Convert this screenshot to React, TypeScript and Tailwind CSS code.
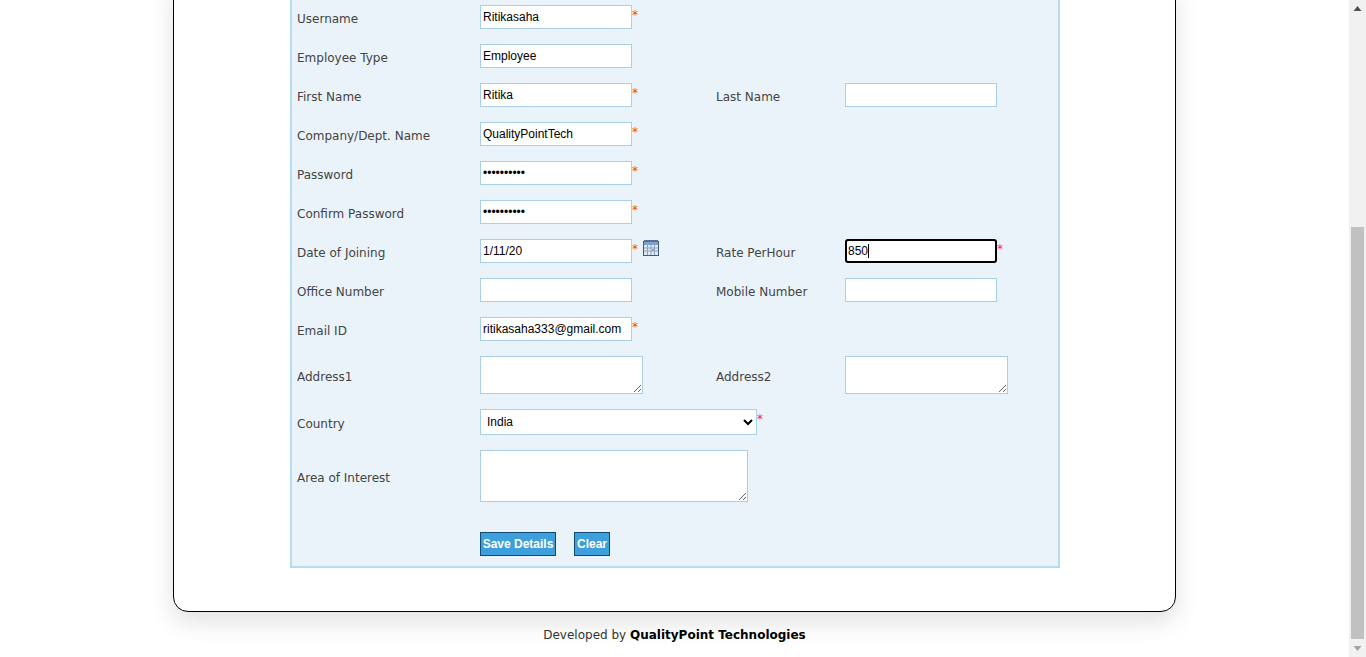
const label = "text-[12px] leading-[15px] text-[#444444] pt-[5px]";
const field = "w-[152px] h-[24px] border border-[#a8cfe6] bg-white px-[2px] text-[12px] text-black outline-none";

function Star({ pink }: { pink?: boolean }) {
  return (
    <span className={`self-start mt-[3px] h-[15px] text-[12px] leading-[15px] font-['DejaVu_Sans',sans-serif] ${pink ? "text-[#ff1a4b]" : "text-[#f24a00]"}`}>*</span>
  );
}

function Field({ value, type = "text", star = false }: { value?: string; type?: string; star?: boolean }) {
  return (
    <div className="flex items-center">
      <input type={type} defaultValue={value} className={`${field} font-['Liberation_Sans',sans-serif]`} />
      {star && <Star />}
    </div>
  );
}

function Row({ name, children, name2, children2 }: { name: string; children: React.ReactNode; name2?: string; children2?: React.ReactNode }) {
  return (
    <div className="grid grid-cols-[183px_236px_129px_1fr] items-center">
      <div className={label}>{name}</div>
      <div>{children}</div>
      {name2 && <div className={label}>{name2}</div>}
      {children2 && <div>{children2}</div>}
    </div>
  );
}

function Calendar() {
  return (
    <svg width="16" height="16" viewBox="0 0 16 16" className="ml-[5px] -mt-[6px]">
      <rect x="0.5" y="1.5" width="15" height="14" fill="#dfe8f5" stroke="#3d5a80" />
      <rect x="1" y="0" width="14" height="2" fill="#5f6f86" />
      <rect x="1" y="2" width="14" height="3" fill="#7f9fcf" />
      <path d="M1 8h14M1 11h14M4.5 5v10M8 5v10M11.5 5v10" stroke="#8ca3c6" strokeWidth="1" />
      <rect x="9" y="9" width="2" height="2" fill="#c48a9f" />
    </svg>
  );
}

function Scrollbar() {
  return (
    <aside className="w-[17px] h-full shrink-0 bg-[#f1f1f1] flex flex-col items-center">
      <svg width="17" height="17" viewBox="0 0 17 17" className="shrink-0">
        <path d="M8.5 6L12.5 11H4.5Z" fill="#505050" />
      </svg>
      <div className="w-[13px] h-[412px] mt-[210px] bg-[#c1c1c1]" />
      <svg width="17" height="17" viewBox="0 0 17 17" className="shrink-0 mt-[1px]">
        <path d="M8.5 11L4.5 6H12.5Z" fill="#a3a3a3" />
      </svg>
    </aside>
  );
}

export default function App() {
  return (
    <div className="h-screen w-full flex overflow-hidden bg-white font-['DejaVu_Sans',sans-serif]">
      <main className="flex-1 min-w-0 h-full flex flex-col justify-end items-center">
        <section className="w-[1003px] shrink-0 border border-black rounded-b-[15px] bg-white shadow-[0_10px_25px_rgba(0,0,0,0.12)] pb-[43px] flex flex-col items-center">
          <form className="w-[770px] ml-[1px] border-2 border-[#b4dcf1] bg-[#eaf3fa] pl-[5px] pt-[20px] pb-[10px] flex flex-col gap-[15px]">
            <Row name="Username"><Field value="Ritikasaha" star /></Row>
            <Row name="Employee Type"><Field value="Employee" /></Row>
            <Row name="First Name" name2="Last Name" children2={<Field />}><Field value="Ritika" star /></Row>
            <Row name="Company/Dept. Name"><Field value="QualityPointTech" star /></Row>
            <Row name="Password"><Field value="ritika1234" type="password" star /></Row>
            <Row name="Confirm Password"><Field value="ritika1234" type="password" star /></Row>
            <Row
              name="Date of Joining"
              name2="Rate PerHour"
              children2={
                <div className="flex items-center">
                  <div className="relative">
                    <input
                      type="text"
                      defaultValue="850"
                      className="block w-[152px] h-[24px] border-2 border-black rounded-[3px] bg-white px-[1px] text-[12px] text-black outline-none caret-transparent font-['Liberation_Sans',sans-serif]"
                    />
                    <span className="absolute left-[23px] top-[5px] w-px h-[14px] bg-black" />
                  </div>
                  <Star pink />
                </div>
              }
            >
              <div className="flex items-center">
                <input type="text" defaultValue="1/11/20" className={`${field} font-['Liberation_Sans',sans-serif]`} />
                <Star />
                <Calendar />
              </div>
            </Row>
            <Row name="Office Number" name2="Mobile Number" children2={<Field />}><Field /></Row>
            <Row name="Email ID"><Field value="ritikasaha333@gmail.com" star /></Row>
            <Row
              name="Address1"
              name2="Address2"
              children2={<textarea className="block w-[163px] h-[38px] border border-[#a8cfe6] bg-white outline-none" />}
            >
              <textarea className="block w-[163px] h-[38px] border border-[#a8cfe6] bg-white outline-none" />
            </Row>
            <Row name="Country">
              <div className="flex items-center w-[290px]">
                <select defaultValue="India" className="w-[277px] h-[26px] shrink-0 border border-[#a8cfe6] bg-white text-[12px] text-black outline-none font-['Liberation_Sans',sans-serif] pl-[2px]">
                  <option>India</option>
                </select>
                <Star pink />
              </div>
            </Row>
            <Row name="Area of Interest">
              <textarea className="block w-[268px] h-[52px] border border-[#a8cfe6] bg-white outline-none" />
            </Row>
            <div className="mt-[15px] pl-[183px] flex gap-[18px]">
              <button type="button" className="w-[76px] h-[24px] border border-[#0f4c75] bg-[#3d9fdc] text-white text-[12px] font-bold font-['Liberation_Sans',sans-serif]">Save Details</button>
              <button type="button" className="w-[36px] h-[24px] border border-[#0f4c75] bg-[#3d9fdc] text-white text-[12px] font-bold font-['Liberation_Sans',sans-serif]">Clear</button>
            </div>
          </form>
        </section>
        <footer className="shrink-0 h-[45px] pt-[16px] text-[12px] leading-[15px] text-[#333333]">
          Developed by <strong className="font-bold text-black">QualityPoint Technologies</strong>
        </footer>
      </main>
      <Scrollbar />
    </div>
  );
}
